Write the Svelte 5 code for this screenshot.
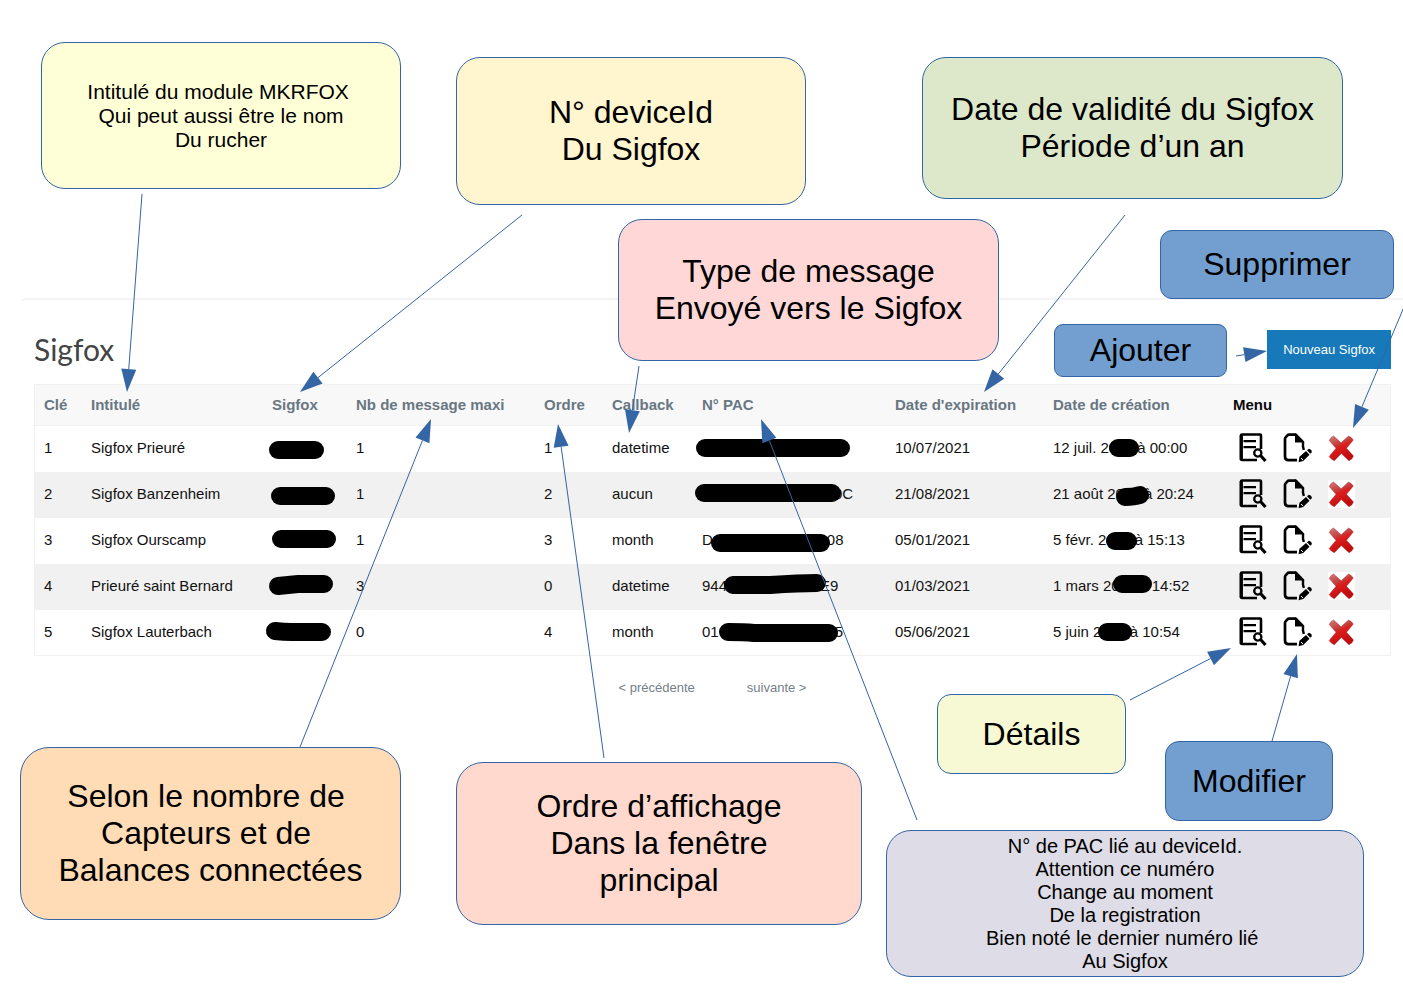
<script>
  const columns = [
    { label: 'Clé', width: 47 },
    { label: 'Intitulé', width: 181 },
    { label: 'Sigfox', width: 84 },
    { label: 'Nb de message maxi', width: 188 },
    { label: 'Ordre', width: 68 },
    { label: 'Callback', width: 90 },
    { label: 'N° PAC', width: 193 },
    { label: "Date d'expiration", width: 158 },
    { label: 'Date de création', width: 180 },
    { label: 'Menu', width: 168, plain: true }
  ];

  const rows = [
    { id: 1, name: 'Sigfox Prieuré', max: 1, order: 1, callback: 'datetime', pac: ['', 0, ''], expires: '10/07/2021', created: ['12 juil. 20', 20, 'à 00:00'] },
    { id: 2, name: 'Sigfox Banzenheim', max: 1, order: 2, callback: 'aucun', pac: ['', 132, '0C'], expires: '21/08/2021', created: ['21 août 20', 20, 'à 20:24'] },
    { id: 3, name: 'Sigfox Ourscamp', max: 1, order: 3, callback: 'month', pac: ['D', 114, '08'], expires: '05/01/2021', created: ['5 févr. 20', 20, 'à 15:13'] },
    { id: 4, name: 'Prieuré saint Bernard', max: 3, order: 0, callback: 'datetime', pac: ['944', 93, 'E9'], expires: '01/03/2021', created: ['1 mars 20', 32, '14:52'] },
    { id: 5, name: 'Sigfox Lauterbach', max: 0, order: 4, callback: 'month', pac: ['01', 116, '5'], expires: '05/06/2021', created: ['5 juin 20', 20, 'à 10:54'] }
  ];

  // Marker strokes that hide private values
  const strokes = [
    'M278 450H315', 'M280 496H326', 'M281 539H327', 'M278 586Q288 585 298 584H324', 'M275 631Q284 632 292 632H322',
    'M705 448H841', 'M704 493H832', 'M720 543H821', 'M733 585H770Q800 583 817 583', 'M728 632Q744 632 754 633H829',
    'M1118 448H1130', 'M1125 497Q1134 497 1140 495', 'M1115 541H1128', 'M1122 584H1143', 'M1107 632H1123'
  ];

  // Arrows: start point, then tip
  const arrows = [
    [142, 194, 127, 392], [522, 215, 300, 392], [1125, 215, 984, 392], [639, 366, 629, 433],
    [300, 747, 431, 419], [604, 758, 558, 424], [917, 820, 761, 419], [1130, 700, 1231, 648],
    [1272, 741, 1297, 654], [1236, 356, 1267, 351], [1412, 288, 1353, 428]
  ].map(([x1, y1, x2, y2]) => {
    const len = Math.hypot(x2 - x1, y2 - y1);
    const ux = (x2 - x1) / len;
    const uy = (y2 - y1) / len;
    const bx = x2 - ux * 23;
    const by = y2 - uy * 23;
    return {
      x1, y1, x2: bx, y2: by,
      head: `${x2},${y2} ${bx - uy * 7.5},${by + ux * 7.5} ${bx + uy * 7.5},${by - ux * 7.5}`
    };
  });

  const notes = [
    { x: 41, y: 42, w: 360, h: 147, r: 24, bg: '#ffffd7', size: 'medium', lines: ['Intitulé du module MKRFOX ', 'Qui peut aussi être le nom', 'Du rucher'] },
    { x: 456, y: 57, w: 350, h: 148, r: 24, bg: '#fff5ce', size: 'large', lines: ['N° deviceId', 'Du Sigfox'] },
    { x: 922, y: 57, w: 421, h: 142, r: 24, bg: '#dde8cb', size: 'large', lines: ['Date de validité du Sigfox', 'Période d’un an'] },
    { x: 618, y: 219, w: 381, h: 142, r: 24, bg: '#ffd7d7', size: 'large', lines: ['Type de message', 'Envoyé vers le Sigfox'] },
    { x: 1160, y: 230, w: 234, h: 69, r: 12, bg: '#729fcf', size: 'large', lines: ['Supprimer'] },
    { x: 1054, y: 324, w: 173, h: 53, r: 9, bg: '#729fcf', size: 'large', lines: ['Ajouter'] },
    { x: 20, y: 747, w: 381, h: 173, r: 29, bg: '#ffdbb6', size: 'large', lines: ['Selon le nombre de ', 'Capteurs et de ', 'Balances connectées'] },
    { x: 456, y: 762, w: 406, h: 163, r: 27, bg: '#ffd8ce', size: 'large', lines: ['Ordre d’affichage', 'Dans la fenêtre', 'principal'] },
    { x: 937, y: 694, w: 189, h: 80, r: 14, bg: '#f6f9d4', size: 'large', lines: ['Détails'] },
    { x: 1165, y: 741, w: 168, h: 80, r: 14, bg: '#729fcf', size: 'large', lines: ['Modifier'] },
    { x: 886, y: 830, w: 478, h: 147, r: 25, bg: '#dedce6', size: 'small', lines: ['N° de PAC lié au deviceId.', 'Attention ce numéro', 'Change au moment', 'De la registration', 'Bien noté le dernier numéro lié ', 'Au Sigfox'] }
  ];
</script>

<div class="page">
  <main class="panel">
    <header class="bar">
      <h1>Sigfox</h1>
      <button class="add" type="button">Nouveau Sigfox</button>
    </header>

    <table>
      <colgroup>
        {#each columns as c}<col style="width: {c.width}px" />{/each}
      </colgroup>
      <thead>
        <tr>
          {#each columns as c}
            <th scope="col">{#if c.plain}{c.label}{:else}<a href="#tri">{c.label}</a>{/if}</th>
          {/each}
        </tr>
      </thead>
      <tbody>
        {#each rows as r}
          <tr>
            <td>{r.id}</td>
            <td>{r.name}</td>
            <td></td>
            <td>{r.max}</td>
            <td>{r.order}</td>
            <td>{r.callback}</td>
            <td>{r.pac[0]}<span class="gap" style="width: {r.pac[1]}px"></span>{r.pac[2]}</td>
            <td>{r.expires}</td>
            <td>{r.created[0]}<span class="gap" style="width: {r.created[1]}px"></span>{r.created[2]}</td>
            <td>
              <div class="actions">
                <button type="button" aria-label="Détails">
                  <svg viewBox="0 0 32 32" fill="none" stroke="#000">
                    <path d="M24 17V3.500Q24 2.500 23 2.500H5Q4 2.500 4 3.500V27Q4 28 5 28H20" stroke-width="2.600" />
                    <path d="M4.300 3V28" stroke-width="3.200" />
                    <path d="M6.500 9.200H19M6.500 15.200H19" stroke-width="2.300" />
                    <circle cx="20.800" cy="21" r="3.600" stroke-width="2.300" />
                    <path d="M23.500 23.500L28.500 29" stroke-width="3.200" />
                  </svg>
                </button>
                <button type="button" aria-label="Modifier">
                  <svg viewBox="0 0 32 32" fill="none" stroke="#000">
                    <path d="M15 2.700H8Q7 2.700 6.400 3.400L4.600 5.400Q4 6 4 7V24.500Q4 28.200 7.500 28.200H16" stroke-width="2.700" />
                    <path d="M22 10V14.500L22.800 18" stroke-width="2.400" />
                    <path d="M14 1.500V10.500H23.200V9.500L15.500 1.500Z" fill="#000" stroke="none" />
                    <path d="M17.500 30.200L18.500 24.800L25 19L28.500 22.700L22.200 29Z" fill="#000" stroke="none" />
                    <path d="M20 26L22 28" stroke="#fff" stroke-width="1" />
                    <path d="M26 18.300L27.800 16.800Q31 17.300 30.800 20.300L29.300 21.800Z" fill="#000" stroke="none" />
                  </svg>
                </button>
                <button type="button" aria-label="Supprimer">
                  <svg viewBox="0 0 32 32">
                    <defs>
                      <linearGradient id="red{r.id}" x1="0" y1="0" x2="0.400" y2="1">
                        <stop offset="0" stop-color="#cf8080" />
                        <stop offset="0.420" stop-color="#c43a3a" />
                        <stop offset="0.500" stop-color="#dc2020" />
                        <stop offset="1" stop-color="#c00c0c" />
                      </linearGradient>
                    </defs>
                    <rect x="3" y="2" width="27" height="28" fill="#fff" />
                    <path d="M8.500 4L16.200 10.800L23.500 4Q26.500 5 28.300 8L21.500 16.300L28.500 24Q27.300 27.500 24 28.800L16.300 21.500L9.300 28.800Q6 27.500 4.200 24.500L11 16.300L4.200 8.500Q5.500 5 8.500 4Z" fill="url(#red{r.id})" stroke="#a81818" stroke-opacity="0.500" stroke-width="0.800" />
                  </svg>
                </button>
              </div>
            </td>
          </tr>
        {/each}
      </tbody>
    </table>

    <nav aria-label="Pagination">
      <a href="#precedente">&lt; précédente</a>
      <a href="#suivante">suivante &gt;</a>
    </nav>
  </main>

  <div class="overlay">
    <svg class="layer" aria-hidden="true">
      {#each strokes as d}<path class="marker" {d} />{/each}
    </svg>
    {#each notes as n}
      <div class="note {n.size}" style="left: {n.x}px; top: {n.y}px; width: {n.w}px; height: {n.h}px; border-radius: {n.r}px; background: {n.bg}">
        {#each n.lines as line}<p>{line}</p>{/each}
      </div>
    {/each}
    <svg class="layer" aria-hidden="true">
      {#each arrows as a}
        <line x1={a.x1} y1={a.y1} x2={a.x2} y2={a.y2} />
        <polygon points={a.head} />
      {/each}
    </svg>
  </div>
</div>

<style>
  :global(body) {
    margin: 0;
    background: #fff;
  }
  .page {
    position: relative;
    box-sizing: border-box;
    min-height: 100vh;
    padding: 298px 0 0 20px;
    font-family: 'Liberation Sans', Arial, sans-serif;
    color: #111;
  }
  .panel {
    border-top: 2px solid #f4f4f8;
    border-top-left-radius: 6px;
    padding: 30px 12px 0 14px;
  }
  .bar {
    display: flex;
    align-items: center;
    justify-content: space-between;
    margin-bottom: 15px;
  }
  h1 {
    margin: 0;
    padding-bottom: 0;
    font: 400 30px/39px Lato, sans-serif;
    color: #444;
  }
  .add {
    height: 39px;
    padding: 0 16px;
    border: 0;
    background: #1779ba;
    color: #fefefe;
    font: 13px/16px 'Liberation Sans', Arial, sans-serif;
  }
  table {
    width: 100%;
    table-layout: fixed;
    border-collapse: collapse;
    outline: 1px solid #f1f1f1;
    outline-offset: -1px;
  }
  th,
  td {
    padding: 0 10px;
    text-align: left;
    white-space: nowrap;
    font-size: 15px;
    line-height: 18px;
  }
  th {
    height: 42px;
    color: #0a0a0a;
  }
  th a {
    color: #687782;
    text-decoration: none;
  }
  thead tr {
    background: #f8f8f8;
    box-shadow: inset 0 -1px #f1f1f1;
  }
  td {
    height: 44px;
    padding-bottom: 2px;
  }
  tbody tr:nth-child(even) {
    background: #f1f1f1;
  }
  .gap {
    display: inline-block;
  }
  .actions {
    display: flex;
    gap: 12px;
    padding-left: 4px;
  }
  .actions button {
    width: 32px;
    height: 32px;
    padding: 0;
    border: 0;
    background: none;
  }
  .actions svg {
    display: block;
    width: 32px;
    height: 32px;
  }
  nav {
    display: flex;
    justify-content: center;
    gap: 52px;
    margin-top: 24px;
    font-size: 13px;
    line-height: 16px;
  }
  nav a {
    color: #75808a;
    text-decoration: none;
  }
  .overlay {
    position: absolute;
    inset: 0;
    overflow: hidden;
    pointer-events: none;
  }
  .layer {
    position: absolute;
    width: 100%;
    height: 100%;
  }
  .marker {
    fill: none;
    stroke: #000;
    stroke-width: 18px;
    stroke-linecap: round;
  }
  line {
    stroke: #3465a4;
    stroke-width: 1px;
  }
  polygon {
    fill: #3465a4;
  }
  .note {
    position: absolute;
    box-sizing: border-box;
    display: flex;
    flex-direction: column;
    align-items: center;
    justify-content: center;
    border: 1px solid #3465a4;
    color: #000;
    white-space: pre;
  }
  .note p {
    margin: 0;
  }
  .large {
    font-size: 32px;
    line-height: 37px;
  }
  .medium {
    font-size: 21px;
    line-height: 24px;
  }
  .small {
    font-size: 20px;
    line-height: 23px;
  }
</style>
